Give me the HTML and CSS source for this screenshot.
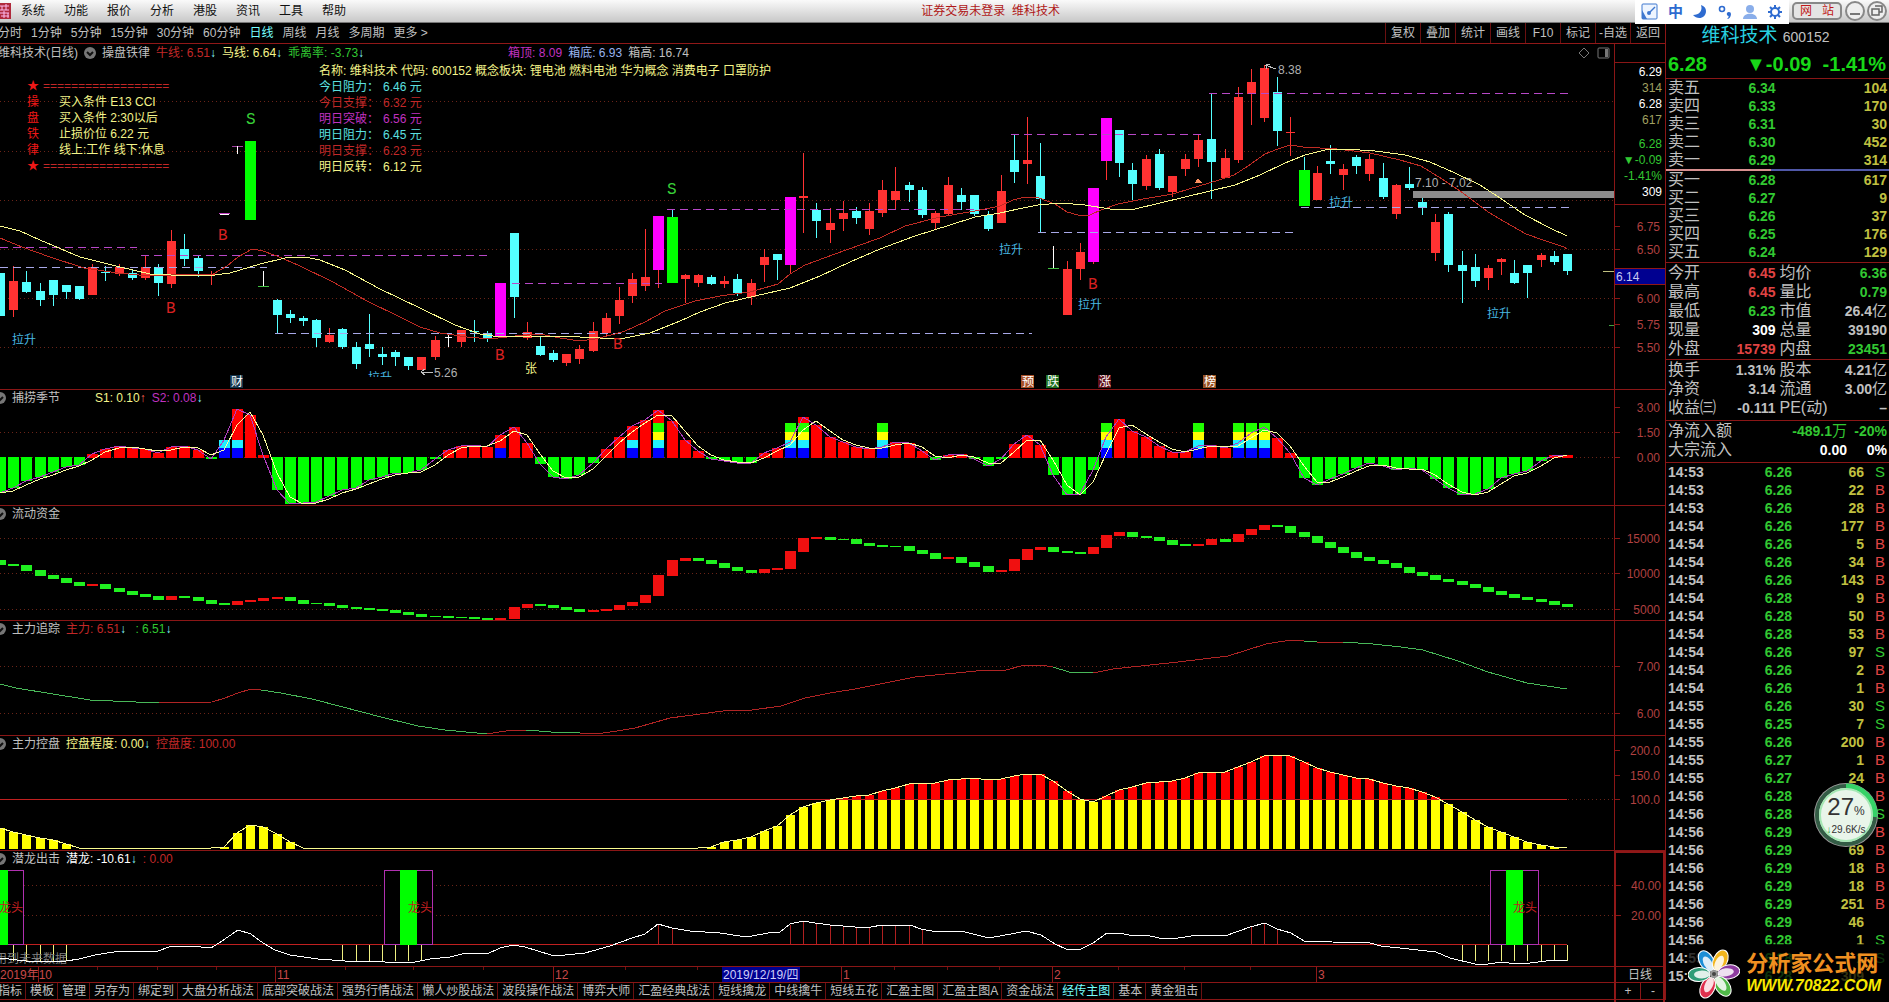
FILE: index.html
```html
<!DOCTYPE html>
<html lang="zh-CN">
<head>
    <meta charset="UTF-8">
    <meta name="viewport" content="width=device-width, initial-scale=1.0">
    <title>维科技术 600152</title>
    <link rel="stylesheet" href="styles.css">
</head>
<body>
    <header class="menubar">
        <span class="app-icon"><svg width="12" height="16" viewBox="0 0 12 16"><rect width="11" height="16" fill="#b02a3c"/><path d="M0 3h9M0 7h9M2 3v4M6 1v6M0 10h9M1 13h8M4 8v7M8 10v5" stroke="#fbe" stroke-width="1"/></svg></span>
        <nav class="menu">
            <button>系统</button>
            <button>功能</button>
            <button>报价</button>
            <button>分析</button>
            <button>港股</button>
            <button>资讯</button>
            <button>工具</button>
            <button>帮助</button>
        </nav>
        <div class="title">证券交易未登录&nbsp; 维科技术</div>
        <div class="ime">
            <svg width="18" height="18" viewBox="0 0 18 18"><rect x="1" y="1" width="15" height="15" rx="1" fill="#eef5ff" stroke="#3f78cf"/><path d="M1 7l5 9H1z" fill="#3f78cf"/><path d="M14 4L8 10" stroke="#3f78cf" stroke-width="1.5"/><circle cx="8" cy="10" r="2" fill="#3f78cf"/></svg>
            <b>中</b>
            <svg width="16" height="16" viewBox="0 0 16 16"><path d="M9 1c2 6-2 10-8 10 4 5 13 4 13-4 0-3-2-5-5-6z" fill="#2e6bd0"/></svg>
            <svg width="16" height="16" viewBox="0 0 16 16"><circle cx="5" cy="5" r="2.5" fill="none" stroke="#2e6bd0" stroke-width="1.6"/><path d="M12 8a2 2 0 0 1 2 2c0 3-2 5-4 5 1-1 2-2 1.5-3a2 2 0 0 1 .5-4z" fill="#2e6bd0"/></svg>
            <svg width="16" height="16" viewBox="0 0 16 16"><circle cx="8" cy="5" r="4" fill="#8aaeea"/><path d="M1 15c0-7 14-7 14 0z" fill="#8aaeea"/></svg>
            <svg width="16" height="16" viewBox="0 0 16 16"><circle cx="8" cy="8" r="4" fill="none" stroke="#2e6bd0" stroke-width="2"/><path d="M8 1v3M8 12v3M1 8h3M12 8h3M3 3l2 2M11 11l2 2M3 13l2-2M11 5l2-2" stroke="#2e6bd0" stroke-width="2"/></svg>
        </div>
        <button class="site">网&nbsp;&nbsp;&nbsp;站</button>
        <button class="win" aria-label="最小化"><svg width="20" height="20" viewBox="0 0 20 20"><circle cx="10" cy="10" r="9" fill="#eee" stroke="#888" stroke-width="2"/><path d="M5 13h10" stroke="#777" stroke-width="2"/></svg></button>
        <button class="win" aria-label="还原"><svg width="20" height="20" viewBox="0 0 20 20"><circle cx="10" cy="10" r="9" fill="#eee" stroke="#888" stroke-width="2"/><path d="M8 5h7v6h-3M5 8h7v6H5z" fill="none" stroke="#666" stroke-width="1.5"/></svg></button>
    </header>

    <div class="workspace">
        <main class="left">
            <div class="toolbar">
                <nav class="periods">
                    <button>分时</button>
                    <button>1分钟</button>
                    <button>5分钟</button>
                    <button>15分钟</button>
                    <button>30分钟</button>
                    <button>60分钟</button>
                    <button class="on">日线</button>
                    <button>周线</button>
                    <button>月线</button>
                    <button>多周期</button>
                    <button>更多 &gt;</button>
                </nav>
                <nav class="tools">
                    <button>复权</button>
                    <button>叠加</button>
                    <button>统计</button>
                    <button>画线</button>
                    <button>F10</button>
                    <button>标记</button>
                    <button>-自选</button>
                    <button>返回</button>
                </nav>
            </div>

            <section class="panel panel-main">
                <div class="plot">
                    <div class="head head-main">
                        <span>维科技术(日线)</span>
                        <svg class="fold" viewBox="0 0 12 12"><circle cx="6" cy="6" r="6" fill="#777"/><path d="M3 5l3 3 3-3" fill="none" stroke="#111" stroke-width="2"/></svg>
                        <span>操盘铁律</span>
                        <span class="red">牛线: 6.51<i>↓</i></span>
                        <span class="yellow">马线: 6.64<i>↓</i></span>
                        <span class="green">乖离率: -3.73<i>↓</i></span>
                        <span class="magenta box-info">箱顶: 8.09</span>
                        <span class="blue">箱底: 6.93</span>
                        <span>箱高: 16.74</span>
                        <svg class="corner" width="32" height="14" viewBox="0 0 32 14"><path d="M6 2l5 5-5 5-5-5z" fill="none" stroke="#777"/><rect x="20" y="2" width="11" height="10" rx="1" fill="none" stroke="#777"/><path d="M27 3v8h3V3z" fill="#777"/></svg>
                    </div>
                    <svg class="chart" id="kline"></svg>
                    <div class="rule-note">
                        <div class="rule-side">★<br>操<br>盘<br>铁<br>律<br>★</div>
                        <div class="rule-text">
                            <p class="rule-line">==================</p>
                            <p>买入条件 E13 CCI</p>
                            <p>买入条件 2:30以后</p>
                            <p>止损价位 6.22 元</p>
                            <p>线上:工作 线下:休息</p>
                            <p class="rule-line">==================</p>
                        </div>
                    </div>
                    <div class="levels">
                        <p class="yellow">名称: 维科技术 代码: 600152 概念板块: 锂电池 燃料电池 华为概念 消费电子 口罩防护</p>
                        <p class="cyan">今日阻力：<span>6.46 元</span></p>
                        <p class="red">今日支撑：<span>6.32 元</span></p>
                        <p class="magenta">明日突破：<span>6.56 元</span></p>
                        <p class="cyan">明日阻力：<span>6.45 元</span></p>
                        <p class="red">明日支撑：<span>6.23 元</span></p>
                        <p class="yellow">明日反转：<span>6.12 元</span></p>
                    </div>
                </div>
                <div class="axis">
                    <div class="mini">
                        <p class="white">6.29</p>
                        <p class="olive">314</p>
                        <p class="white">6.28</p>
                        <p class="olive">617</p>
                        <p class="green mini-gap">6.28</p>
                        <p class="green">▼-0.09</p>
                        <p class="green">-1.41%</p>
                        <p class="white">309</p>
                    </div>
                    <svg class="scale" id="kline-scale"></svg>
                </div>
            </section>

            <section class="panel panel-tall">
                <div class="plot">
                    <div class="head">
                        <svg class="fold" viewBox="0 0 12 12"><circle cx="6" cy="6" r="6" fill="#777"/><path d="M3 5l3 3 3-3" fill="none" stroke="#111" stroke-width="2"/></svg>
                        <span class="wide">捕捞季节</span>
                        <span class="yellow">S1: 0.10<i class="up">↑</i></span>
                        <span class="magenta">S2: 0.08<i>↓</i></span>
                    </div>
                    <svg class="chart" id="season"></svg>
                </div>
                <div class="axis"><svg class="scale" id="season-scale"></svg></div>
            </section>

            <section class="panel">
                <div class="plot">
                    <div class="head">
                        <svg class="fold" viewBox="0 0 12 12"><circle cx="6" cy="6" r="6" fill="#777"/><path d="M3 5l3 3 3-3" fill="none" stroke="#111" stroke-width="2"/></svg>
                        <span>流动资金</span>
                    </div>
                    <svg class="chart" id="flow"></svg>
                </div>
                <div class="axis"><svg class="scale" id="flow-scale"></svg></div>
            </section>

            <section class="panel">
                <div class="plot">
                    <div class="head">
                        <svg class="fold" viewBox="0 0 12 12"><circle cx="6" cy="6" r="6" fill="#777"/><path d="M3 5l3 3 3-3" fill="none" stroke="#111" stroke-width="2"/></svg>
                        <span>主力追踪</span>
                        <span class="red">主力: 6.51<i>↓</i></span>
                        <span class="green">&nbsp;: 6.51<i>↓</i></span>
                    </div>
                    <svg class="chart" id="track"></svg>
                </div>
                <div class="axis"><svg class="scale" id="track-scale"></svg></div>
            </section>

            <section class="panel">
                <div class="plot">
                    <div class="head">
                        <svg class="fold" viewBox="0 0 12 12"><circle cx="6" cy="6" r="6" fill="#777"/><path d="M3 5l3 3 3-3" fill="none" stroke="#111" stroke-width="2"/></svg>
                        <span>主力控盘</span>
                        <span class="yellow">控盘程度: 0.00<i>↓</i></span>
                        <span class="red">控盘度: 100.00</span>
                    </div>
                    <svg class="chart" id="control"></svg>
                </div>
                <div class="axis"><svg class="scale" id="control-scale"></svg></div>
            </section>

            <section class="panel panel-tall">
                <div class="plot">
                    <div class="head">
                        <svg class="fold" viewBox="0 0 12 12"><circle cx="6" cy="6" r="6" fill="#777"/><path d="M3 5l3 3 3-3" fill="none" stroke="#111" stroke-width="2"/></svg>
                        <span>潜龙出击</span>
                        <span class="white">潜龙: -10.61<i>↓</i></span>
                        <span class="red">: 0.00</span>
                    </div>
                    <svg class="chart" id="dragon"></svg>
                </div>
                <div class="axis axis-active"><svg class="scale" id="dragon-scale"></svg></div>
            </section>

            <div class="timeline">
                <svg id="dates"></svg>
                <div class="period-name">日线</div>
            </div>

            <div class="tabs">
                <nav>
                    <button>指标</button>
                    <button>模板</button>
                    <button>管理</button>
                    <button>另存为</button>
                    <button>绑定到</button>
                    <button>大盘分析战法</button>
                    <button>底部突破战法</button>
                    <button>强势行情战法</button>
                    <button>懒人炒股战法</button>
                    <button>波段操作战法</button>
                    <button>博弈大师</button>
                    <button>汇盈经典战法</button>
                    <button>短线擒龙</button>
                    <button>中线擒牛</button>
                    <button>短线五花</button>
                    <button>汇盈主图</button>
                    <button>汇盈主图A</button>
                    <button>资金战法</button>
                    <button class="on">经传主图</button>
                    <button>基本</button>
                    <button>黄金狙击</button>
                </nav>
                <div class="zoomers">
                    <button>+</button>
                    <button>-</button>
                </div>
            </div>
        </main>

        <aside class="quote">
            <h1>维科技术 <small>600152</small></h1>
            <div class="price">
                <span>6.28</span>
                <span class="change">▼-0.09</span>
                <span>-1.41%</span>
            </div>
            <table class="book">
                <tr><th>卖五</th><td>6.34</td><td>104</td></tr>
                <tr><th>卖四</th><td>6.33</td><td>170</td></tr>
                <tr><th>卖三</th><td>6.31</td><td>30</td></tr>
                <tr><th>卖二</th><td>6.30</td><td>452</td></tr>
                <tr><th>卖一</th><td>6.29</td><td>314</td></tr>
            </table>
            <div class="ratio"></div>
            <table class="book">
                <tr><th>买一</th><td>6.28</td><td>617</td></tr>
                <tr><th>买二</th><td>6.27</td><td>9</td></tr>
                <tr><th>买三</th><td>6.26</td><td>37</td></tr>
                <tr><th>买四</th><td>6.25</td><td>176</td></tr>
                <tr><th>买五</th><td>6.24</td><td>129</td></tr>
            </table>
            <table class="stats">
                <tr><th>今开</th><td class="up">6.45</td><th>均价</th><td class="down">6.36</td></tr>
                <tr><th>最高</th><td class="up">6.45</td><th>量比</th><td class="down">0.79</td></tr>
                <tr><th>最低</th><td class="down">6.23</td><th>市值</th><td>26.4<span>亿</span></td></tr>
                <tr><th>现量</th><td class="white">309</td><th>总量</th><td>39190</td></tr>
                <tr><th>外盘</th><td class="up">15739</td><th>内盘</th><td class="down">23451</td></tr>
            </table>
            <table class="stats stats-base">
                <tr><th>换手</th><td>1.31%</td><th>股本</th><td>4.21<span>亿</span></td></tr>
                <tr><th>净资</th><td>3.14</td><th>流通</th><td>3.00<span>亿</span></td></tr>
                <tr><th>收益㈢</th><td>-0.111</td><th>PE(动)</th><td class="dash">–</td></tr>
            </table>
            <table class="inflow">
                <tr class="down"><th>净流入额</th><td>-489.1<span>万</span></td><td>-20%</td></tr>
                <tr class="white"><th>大宗流入</th><td>0.00</td><td>0%</td></tr>
            </table>
            <table class="ticks"><tbody id="ticks"></tbody></table>

            <div class="speed">
                <svg width="66" height="66" viewBox="0 0 66 66"><circle cx="33" cy="33" r="32" fill="#9a9a9a"/><circle cx="33" cy="33" r="29" fill="#e9f5ea" stroke="#335c45" stroke-width="4"/><path d="M33 4a29 29 0 0 1 29 31" fill="none" stroke="#35d267" stroke-width="5"/><circle cx="33" cy="33" r="26" fill="none" stroke="#a5e8b4" stroke-width="2"/></svg>
                <div class="speed-text"><b>27<small>%</small></b><span><i>↓</i>29.6K/s</span></div>
            </div>
            <div class="brand">
                <svg width="52" height="52" viewBox="-26 -26 52 52">
                    <g stroke="#fff" stroke-width="1">
                        <ellipse cx="0" cy="-15" rx="7" ry="11" fill="#1c8fd6" transform="rotate(-30)"/>
                        <ellipse cx="0" cy="-15" rx="7" ry="11" fill="#f2b51c" transform="rotate(25)"/>
                        <ellipse cx="0" cy="-15" rx="7" ry="11" fill="#8e3ba0" transform="rotate(82)"/>
                        <ellipse cx="0" cy="-15" rx="7" ry="11" fill="#4fb848" transform="rotate(145)"/>
                        <ellipse cx="0" cy="-15" rx="7" ry="11" fill="#e0304e" transform="rotate(205)"/>
                        <ellipse cx="0" cy="-15" rx="7" ry="11" fill="#2f9c78" transform="rotate(268)"/>
                    </g>
                    <g fill="#fff" opacity=".85">
                        <ellipse cx="0" cy="-12" rx="4" ry="8" transform="rotate(-30)"/>
                        <ellipse cx="0" cy="-12" rx="4" ry="8" transform="rotate(25)"/>
                        <ellipse cx="0" cy="-12" rx="4" ry="8" transform="rotate(82)"/>
                        <ellipse cx="0" cy="-12" rx="4" ry="8" transform="rotate(145)"/>
                        <ellipse cx="0" cy="-12" rx="4" ry="8" transform="rotate(205)"/>
                        <ellipse cx="0" cy="-12" rx="4" ry="8" transform="rotate(268)"/>
                    </g>
                    <circle r="4" fill="#999"/><circle r="2" fill="#444"/>
                </svg>
                <div>
                    <strong>分析家公式网</strong>
                    <a href="#">WWW.70822.COM</a>
                </div>
            </div>
        </aside>
    </div>

    <script src="script.js"></script>
</body>
</html>
```
FILE: styles.css
```css
* {
    box-sizing: border-box;
}
body {
    margin: 0;
    min-height: 100vh;
    background-color: #000;
    color: #c0c0c0;
    font-family: "Liberation Sans", "Noto Sans CJK SC", sans-serif;
    font-size: 12px;
    line-height: 16px;
    overflow-x: hidden;
}
button {
    border: none;
    background: none;
    padding: 0;
    color: inherit;
    font: inherit;
    white-space: nowrap;
    cursor: pointer;
}
p {
    margin: 0;
}
svg {
    display: block;
}
i {
    font-style: normal;
    font-weight: bold;
    color: #8ff;
}
i.up {
    color: #f65;
}

.red { color: #c22828; }
.green { color: #32c832; }
.yellow { color: #f4f48a; }
.cyan { color: #5ce0e0; }
.magenta { color: #c032c0; }
.blue { color: #98b4f0; }
.white { color: #fff; }
.olive { color: #a0a060; }

/* メニューバー */
.menubar {
    display: flex;
    align-items: center;
    height: 23px;
    background: linear-gradient(#fafafa, #c8c8c8);
    border-bottom: 1px solid #777;
    color: #111;
}
.app-icon {
    width: 21px;
}
.menu {
    display: flex;
    gap: 19px;
}
.title {
    margin-left: auto;
    color: #b01818;
}
.ime {
    display: flex;
    align-items: center;
    justify-content: space-between;
    align-self: flex-start;
    width: 154px;
    height: 24px;
    margin-left: auto;
    padding: 0 6px;
    background-color: #fff;
    color: #2e6bd0;
    font-size: 15px;
    z-index: 1;
}
.site {
    width: 50px;
    height: 18px;
    margin: 0 3px;
    border: 2px solid #888;
    border-radius: 5px;
    background-color: #e4e4e4;
    color: #c01818;
    line-height: 12px;
}
.win {
    width: 22px;
}

.workspace {
    display: flex;
}
.left {
    flex: 1;
    min-width: 0;
}

/* ツールバー */
.toolbar {
    display: flex;
    justify-content: space-between;
    height: 21px;
    border-bottom: 1px solid #901818;
}
.periods {
    display: flex;
    gap: 9px;
    margin-left: -2px;
}
.tools {
    display: flex;
}
.tools button {
    width: 35px;
    border-left: 1px solid #6a1010;
}
.on {
    color: #7ff;
}

/* チャート */
.panel {
    display: grid;
    grid-template-columns: 1fr 51px;
    height: 115px;
    border-bottom: 1px solid #8a1616;
}
.panel-tall {
    height: 116px;
}
.panel-main {
    height: 346px;
}
.plot {
    position: relative;
    display: flex;
    flex-direction: column;
    min-width: 0;
    overflow: hidden;
}
.head {
    display: flex;
    align-items: center;
    gap: 6px;
    height: 16px;
    margin-left: -6px;
    white-space: nowrap;
}
.head-main {
    height: 18px;
    margin-left: -2px;
}
.head .wide {
    width: 77px;
}
.box-info {
    margin-left: 138px;
}
.corner {
    margin-left: auto;
    margin-right: 4px;
}
.fold {
    flex: none;
    width: 12px;
    height: 12px;
}
.chart {
    flex: 1;
    width: 100%;
    min-height: 0;
    overflow: visible;
}
svg text {
    font-size: 12px;
    fill: currentColor;
}
svg .signal {
    font-family: "Liberation Mono", monospace;
    font-size: 16px;
}
.axis {
    display: flex;
    flex-direction: column;
    border-left: 1px solid #8a1616;
    color: #b04040;
}
.axis-active {
    border: 2px solid #901818;
}
.scale {
    flex: 1;
    width: 100%;
    min-height: 0;
    overflow: visible;
}
.mini {
    height: 143px;
    margin-top: 18px;
    padding: 1px 3px 0 0;
    border-top: 1px solid #8a1616;
    border-bottom: 1px solid #8a1616;
    text-align: right;
    line-height: 16px;
}
.mini-gap {
    margin-top: 8px;
}
.rule-note {
    position: absolute;
    top: 34px;
    left: 27px;
    display: flex;
    color: #f01818;
}
.rule-text {
    color: #f4f48a;
}
.rule-text p {
    margin-left: 20px;
}
.rule-text .rule-line {
    margin-left: 4px;
    color: #c22828;
}
.levels {
    position: absolute;
    top: 19px;
    left: 319px;
    white-space: nowrap;
}
.levels span {
    margin-left: 4px;
}
.timeline {
    display: grid;
    grid-template-columns: 1fr 51px;
    height: 16px;
    border-bottom: 1px solid #8a1616;
    color: #c04040;
}
#dates {
    width: 100%;
    height: 16px;
}
.period-name {
    border-left: 1px solid #8a1616;
    color: #c0c0c0;
    text-align: center;
}
.tabs {
    display: flex;
    justify-content: space-between;
    height: 17px;
    border-bottom: 1px solid #8a1616;
}
.tabs nav {
    display: flex;
    margin-left: -6px;
}
.tabs nav button {
    padding: 0 3px 0 4px;
    border-right: 1px solid #6a1010;
}
.zoomers {
    display: flex;
}
.zoomers button {
    width: 25px;
    border-left: 1px solid #8a1616;
}

/* 気配・歩み値 */
.quote {
    position: relative;
    width: 224px;
    border-left: 1px solid #8a1616;
    font-size: 14px;
}
.quote h1 {
    height: 28px;
    margin: 0;
    padding-right: 24px;
    color: #28d0e0;
    font-size: 19px;
    font-weight: normal;
    line-height: 26px;
    text-align: center;
}
.quote h1 small {
    color: #c0c0c0;
    font-size: 14px;
}
.price {
    display: flex;
    justify-content: space-between;
    height: 28px;
    padding: 0 3px 0 2px;
    border-bottom: 1px solid #8a1616;
    color: #18d818;
    font-size: 20px;
    font-weight: bold;
    line-height: 27px;
}
.change {
    margin-left: 28px;
}
.quote table {
    width: 100%;
    border-collapse: separate;
    border-spacing: 0;
    table-layout: fixed;
    line-height: 18px;
}
.quote th {
    padding: 0 0 0 2px;
    font-size: 16px;
    font-weight: normal;
    text-align: left;
    white-space: nowrap;
}
.quote td {
    padding: 0;
    font-weight: bold;
    text-align: right;
    white-space: nowrap;
}
.quote td:last-child {
    padding-right: 2px;
}
.quote td span {
    font-size: 15px;
    font-weight: normal;
}
.book tr,
.ticks tr {
    height: 18px;
}
.book td {
    color: #c0c040;
}
.book td:nth-child(2) {
    padding-right: 39px;
    color: #32c832;
}
.ratio {
    height: 2px;
    background: linear-gradient(90deg, #d89090 47%, #5058a8 47%);
}
.stats {
    margin-top: 1px;
    border-top: 1px solid #8a1616;
}
.stats tr,
.inflow tr {
    height: 19px;
}
.stats th {
    width: 50px;
}
.stats td:nth-child(2) {
    padding-right: 2px;
}
.quote .up {
    color: #e04444;
}
.quote .down,
.quote .down td {
    color: #32c832;
}
.quote .down th,
.quote .white th {
    color: #c0c0c0;
}
.quote .dash {
    padding-right: 14px;
}
.inflow {
    margin-top: 3px;
    padding-bottom: 3px;
    border-top: 1px solid #8a1616;
    border-bottom: 1px solid #8a1616;
}
.inflow th {
    width: 80px;
}
.inflow td:last-child {
    width: 42px;
}
.ticks td:nth-child(1) {
    width: 40px;
    padding-left: 2px;
    text-align: left;
}
.ticks td:nth-child(2) {
    width: 86px;
    color: #32c832;
}
.ticks td:nth-child(3) {
    width: 72px;
    color: #c0c040;
}
.ticks .sell {
    color: #32c832;
}
.ticks .buy {
    color: #e04444;
}
.quote .ticks td:last-child {
    padding-right: 4px;
    font-weight: normal;
    font-size: 15px;
}
.speed {
    position: absolute;
    top: 759px;
    right: 10px;
}
.speed-text {
    position: absolute;
    inset: 14px 0 0;
    color: #333;
    font-size: 10px;
    text-align: center;
}
.speed-text b {
    display: block;
    font-size: 24px;
    font-weight: normal;
    line-height: 22px;
}
.speed-text small {
    font-size: 12px;
}
.speed-text i {
    color: #1a9a40;
}
.brand {
    position: absolute;
    right: 0;
    bottom: 0;
    display: flex;
    align-items: center;
    gap: 6px;
    padding: 4px 8px 0 0;
    background-color: rgba(0, 0, 0, 0.75);
}
.brand strong {
    display: block;
    color: #f09020;
    font-size: 22px;
    line-height: 24px;
}
.brand a {
    display: block;
    color: #f8e800;
    font-size: 16px;
    font-style: italic;
    font-weight: bold;
    line-height: 20px;
    text-decoration: none;
}
```
FILE: script.js
```js
const NS = 'http://www.w3.org/2000/svg';
const BASE_WIDTH = 1614;
const BASE_STEP = 13.168;

const RED = '#ff3232';
const CYAN = '#54ffff';
const GREEN = '#00ff00';

// 種別, 実体上, 実体下, 高値, 安値
const candles = [
    ['c', 273, 316, 273, 316], ['r', 281, 310, 266, 317], ['c', 282, 292, 271, 293], ['c', 291, 300, 283, 306],
    ['c', 280, 295, 280, 306], ['c', 285, 292, 285, 299], ['c', 286, 299, 286, 300], ['r', 267, 295, 264, 295],
    ['c', 272, 273, 266, 281], ['r', 267, 274, 264, 276], ['c', 273, 278, 270, 280], ['r', 267, 278, 256, 280],
    ['c', 267, 283, 264, 296], ['r', 241, 284, 230, 288], ['c', 249, 259, 234, 266], ['c', 258, 271, 256, 277],
    ['r', 274, 275, 271, 285], ['p', 213, 214, 213, 214], ['t', 146, 147, 146, 154], ['G', 141, 220, 141, 220],
    ['u', 286, 287, 271, 286], ['c', 300, 315, 299, 333], ['c', 314, 318, 310, 323], ['c', 318, 321, 316, 326],
    ['c', 320, 338, 319, 347], ['r', 335, 342, 328, 343], ['c', 329, 347, 328, 349], ['c', 347, 364, 342, 369],
    ['c', 344, 349, 314, 357], ['c', 354, 357, 347, 365], ['c', 352, 357, 350, 366], ['c', 357, 366, 357, 370],
    ['r', 357, 370, 357, 370], ['r', 340, 357, 336, 360], ['w', 337, 338, 335, 347], ['r', 330, 342, 330, 347],
    ['c', 331, 332, 320, 342], ['c', 333, 338, 331, 342], ['M', 283, 337, 283, 337], ['c', 233, 297, 233, 318],
    ['r', 332, 338, 322, 340], ['c', 346, 355, 336, 356], ['c', 353, 360, 350, 362], ['r', 354, 363, 354, 366],
    ['r', 349, 359, 345, 364], ['r', 331, 351, 322, 352], ['r', 318, 333, 313, 337], ['r', 300, 316, 287, 324],
    ['r', 279, 296, 273, 303], ['r', 277, 286, 229, 291], ['M', 216, 270, 216, 288], ['G', 217, 283, 210, 283],
    ['r', 275, 279, 274, 303], ['r', 275, 283, 274, 287], ['c', 277, 284, 275, 285], ['r', 281, 284, 276, 288],
    ['c', 279, 293, 274, 296], ['r', 283, 297, 279, 305], ['r', 257, 265, 249, 282], ['c', 254, 260, 254, 280],
    ['M', 197, 265, 197, 273], ['r', 196, 198, 153, 233], ['c', 210, 221, 203, 238], ['r', 223, 230, 208, 243],
    ['r', 213, 219, 201, 231], ['c', 211, 218, 207, 224], ['r', 211, 229, 203, 235], ['r', 190, 213, 180, 217],
    ['r', 191, 200, 167, 210], ['c', 185, 190, 182, 202], ['c', 190, 215, 187, 218], ['r', 213, 223, 211, 229],
    ['r', 185, 214, 177, 216], ['c', 195, 202, 188, 210], ['c', 195, 214, 195, 216], ['c', 215, 229, 211, 231],
    ['r', 191, 223, 175, 223], ['c', 160, 172, 135, 183], ['r', 160, 164, 117, 184], ['c', 176, 199, 143, 232],
    ['u', 268, 269, 246, 268], ['r', 269, 315, 261, 315], ['r', 252, 269, 243, 280], ['M', 188, 262, 188, 264],
    ['M', 118, 161, 118, 180], ['c', 130, 163, 130, 177], ['c', 170, 184, 163, 200], ['r', 159, 186, 155, 190],
    ['c', 154, 188, 149, 190], ['r', 176, 192, 176, 197], ['r', 159, 169, 154, 176], ['r', 140, 159, 134, 167],
    ['c', 139, 162, 94, 199], ['r', 158, 178, 149, 178], ['r', 97, 160, 87, 163], ['r', 82, 94, 69, 125],
    ['r', 68, 118, 65, 122], ['c', 92, 131, 77, 146], ['r', 132, 133, 117, 156], ['G', 170, 206, 157, 206],
    ['r', 173, 200, 166, 200], ['c', 161, 164, 145, 174], ['r', 169, 175, 164, 190], ['c', 157, 166, 155, 174],
    ['r', 159, 174, 154, 181], ['c', 178, 197, 163, 199], ['r', 185, 214, 184, 219], ['c', 184, 188, 167, 190],
    ['c', 202, 208, 198, 215], ['r', 222, 253, 214, 261], ['c', 214, 265, 212, 272], ['c', 265, 271, 251, 303],
    ['c', 267, 281, 254, 287], ['r', 268, 278, 265, 290], ['r', 259, 262, 258, 275], ['c', 273, 283, 260, 284],
    ['c', 265, 273, 265, 298], ['r', 255, 260, 253, 267], ['c', 256, 262, 251, 265], ['c', 254, 271, 254, 275]
];

const maRed = '0,238 22,247 50,257 84,268 118,273 150,276 171,275 213,274 227,266 238,257 252,249 263,251 277,256 300,266 333,282 367,301 400,317 420,327 440,333 467,337 490,339 515,336 540,334 560,338 580,341 595,339 615,334 625,331 645,322 665,311 695,301 720,296 750,292 778,284 790,274 805,265 835,254 860,245 880,238 905,226 940,217 975,211 1000,206 1013,200 1025,197 1039,198 1055,204 1067,212 1078,215 1090,215 1101,210 1118,204 1143,199 1173,194 1189,189 1219,180 1234,175 1248,166 1265,154 1278,149 1290,145 1303,147 1337,149 1370,153 1400,160 1421,166 1442,179 1463,193 1488,212 1505,222 1526,234 1543,240 1564,247 1567,249';
const maYellow = '0,226 20,231 40,240 80,257 120,267 150,274 171,275 215,275 230,273 260,264 285,258 305,257 320,260 345,270 380,289 420,308 455,325 480,334 500,337 530,336 580,337 600,338 620,339 650,333 680,321 700,312 725,303 755,296 790,288 820,276 850,262 880,249 915,236 950,225 975,217 1000,213 1018,209 1038,205 1060,203 1085,205 1110,209 1135,209 1160,203 1185,197 1210,191 1235,185 1260,175 1285,163 1305,155 1325,150 1345,149 1375,151 1405,155 1430,162 1455,173 1480,185 1500,198 1525,215 1550,228 1567,236';

const season = [
    493, 488, 481, 477, 472, 467, 465, 454, 449, 446, 448, 449, 453, 447, 446, 450, 459, 440, 409, 415,
    455, 490, 504, 503, 502, 496, 490, 488, 480, 477, 473, 473, 470, 459, 450, 446, 445, 447, 435, 427,
    443, 464, 477, 479, 475, 463, 449, 437, 426, 420, 410, 421, 440, 451, 459, 461, 463, 463, 453, 448,
    442, 417, 425, 437, 442, 447, 449, 447, 442, 443, 451, 460, 455, 454, 459, 466, 459, 444, 435, 445,
    475, 495, 494, 470, 437, 419, 431, 437, 446, 452, 452, 446, 445, 448, 443, 433, 427, 438, 453, 478,
    485, 479, 474, 468, 463, 466, 470, 468, 470, 479, 488, 495, 494, 489, 478, 474, 471, 461, 455, 455
];
// 積み上げ表示の段数
const stacks = { 17: 2, 18: 2, 38: 1, 48: 2, 50: 4, 60: 4, 61: 4, 67: 4, 84: 4, 91: 4, 94: 4, 95: 4, 96: 4 };

const flow = [
    184, 185, 190, 195, 198, 202, 205, 204, 208, 211, 214, 216, 219, 216, 217, 220, 223, 224, 221, 220,
    218, 217, 220, 223, 223, 225, 227, 228, 229, 230, 232, 234, 236, 236, 237, 237, 238, 239, 238, 227,
    224, 225, 227, 229, 231, 230, 229, 225, 222, 215, 195, 180, 178, 180, 183, 187, 190, 192, 189, 188,
    171, 158, 157, 159, 159, 163, 165, 166, 166, 170, 173, 178, 177, 182, 186, 191, 190, 179, 169, 167,
    171, 172, 173, 167, 155, 152, 156, 157, 160, 164, 165, 164, 159, 161, 154, 149, 145, 146, 152, 156,
    162, 167, 172, 177, 180, 183, 187, 192, 195, 199, 201, 204, 207, 211, 214, 217, 219, 221, 224, 226
];

const track = [
    ['g', '0,684 16,688 90,700 159,703'],
    ['r', '159,703 212,702 225,698 238,693 251,689 261,690'],
    ['g', '261,690 281,693 312,699 339,706 381,717 418,726 445,730 466,732 487,734'],
    ['r', '487,734 512,730 526,730'],
    ['g', '526,730 551,732 580,733'],
    ['r', '580,733 596,734 617,731 635,728 670,718 723,711 752,710 781,706 805,698 830,693 855,689 915,677 976,671 1006,670 1025,665 1041,665 1053,667'],
    ['g', '1053,667 1069,672 1093,673'],
    ['r', '1093,673 1113,669 1178,662 1228,656 1266,644 1291,640 1304,641'],
    ['g', '1304,641 1317,642'],
    ['r', '1317,642 1343,642'],
    ['g', '1343,642 1373,644 1401,647 1423,650 1458,661 1488,672 1527,683 1567,689']
];

const control = [
    828, 832, 835, 838, 840, 844, 848, 848, 848, 848, 848, 848, 848, 848, 848, 848, 848, 847, 833, 825,
    827, 834, 842, 848, 848, 848, 848, 848, 848, 848, 848, 848, 848, 848, 848, 848, 848, 848, 848, 848,
    848, 848, 848, 848, 848, 848, 848, 848, 848, 848, 848, 848, 848, 848, 847, 842, 840, 837, 831, 826,
    815, 807, 803, 800, 798, 796, 795, 791, 788, 784, 783, 783, 780, 779, 778, 780, 779, 776, 774, 774,
    781, 791, 799, 802, 796, 790, 787, 783, 782, 781, 778, 773, 772, 772, 767, 762, 756, 755, 756, 762,
    768, 772, 775, 778, 779, 783, 786, 788, 792, 797, 804, 812, 820, 827, 832, 837, 842, 845, 847, 848
];

const dragon = '0,958 26,961 66,961 79,959 95,955 120,951 150,951 158,951 172,946 190,946 211,948 222,941 238,930 251,934 263,943 275,950 290,955 318,959 345,961 357,962 370,961 385,962 415,962 430,959 450,957 462,954 475,953 487,954 500,948 513,945 525,947 551,955 565,955 585,953 610,946 632,938 645,934 658,924 672,928 690,931 720,933 740,936 752,936 768,933 780,932 790,924 803,921 815,923 830,925 855,927 871,927 882,925 910,925 921,929 937,932 948,931 965,932 989,938 1011,934 1026,931 1041,935 1055,944 1066,949 1079,950 1093,943 1107,933 1118,933 1135,936 1146,935 1159,938 1178,938 1198,935 1225,936 1250,927 1265,923 1277,929 1291,933 1304,941 1332,942 1370,943 1381,946 1409,949 1436,952 1450,958 1475,964 1488,964 1502,962 1516,964 1530,963 1554,960 1567,960';

let ratio = 1;

function px(x) {
    return Math.round(x * ratio);
}

function barX(i) {
    return px(i * BASE_STEP);
}

function add(parent, name, attrs, text) {
    const el = document.createElementNS(NS, name);
    for (const key in attrs) el.setAttribute(key, attrs[key]);
    if (text !== undefined) el.textContent = text;
    parent.appendChild(el);
    return el;
}

// 各チャートは画面のY座標で描くので、開始位置だけずらす
function layer(id, top) {
    const svg = document.getElementById(id);
    svg.innerHTML = '';
    return add(svg, 'g', { transform: `translate(0,${-top})`, 'shape-rendering': 'crispEdges' });
}

function rect(g, x, y, w, h, fill) {
    add(g, 'rect', { x: x, y: y, width: w, height: Math.max(1, h), fill: fill });
}

function line(g, x1, y1, x2, y2, stroke, dash) {
    const el = add(g, 'line', { x1: x1, y1: y1 + 0.5, x2: x2, y2: y2 + 0.5, stroke: stroke });
    if (dash) el.setAttribute('stroke-dasharray', dash);
}

function vline(g, x, y1, y2, stroke) {
    rect(g, x, y1, 1, y2 - y1, stroke);
}

function poly(g, points, stroke) {
    const scaled = points.split(' ').map(p => {
        const [x, y] = p.split(',');
        return `${px(x)},${y}`;
    }).join(' ');
    add(g, 'polyline', { points: scaled, fill: 'none', stroke: stroke });
}

function label(g, x, y, text, color, cls) {
    add(g, 'text', { x: x, y: y, style: `fill:${color}`, class: cls || '' }, text);
}

function grid(g, ys) {
    ys.forEach(y => line(g, 0, y, px(BASE_WIDTH), y, '#6a2418', '1 3'));
}

function scale(id, top, labels) {
    const g = layer(id, top);
    labels.forEach(([y, text]) => {
        rect(g, 0, y, 5, 1, '#8a1616');
        add(g, 'text', { x: 45, y: y + 5, 'text-anchor': 'end' }, text);
    });
    return g;
}

function drawKline() {
    const g = layer('kline', 62);
    grid(g, [101, 151, 200, 249, 298, 347]);

    candles.forEach(([type, top, bottom, high, low], i) => {
        const x = barX(i);
        const h = bottom - top;
        if (type === 'c' || type === 'r') {
            const color = type === 'c' ? CYAN : RED;
            vline(g, x, high, low, color);
            rect(g, x - 4, top, 9, h, color);
        } else if (type === 'G' || type === 'M') {
            vline(g, x, high, low, type === 'G' ? CYAN : RED);
            rect(g, x - 5, top, 11, h, type === 'G' ? GREEN : '#ff00ff');
        } else if (type === 'p') {
            rect(g, x - 5, top, 11, 1, '#c040c0');
            rect(g, x - 4, top + 1, 9, 1, '#fff');
        } else {
            const w = type === 'w' ? 7 : 11;
            rect(g, x - (w - 1) / 2, top, w, 1, type === 'u' ? '#40c040' : type === 't' ? '#a040a0' : '#fff');
            vline(g, x, high, low, '#fff');
        }
    });

    const purple = [[0, 137, 247], [141, 492, 255], [512, 662, 283], [667, 993, 209], [1011, 1202, 134], [1209, 1572, 93]];
    const pale = [[0, 267, 267], [275, 1032, 333], [1038, 1296, 232], [1301, 1572, 207]];
    purple.forEach(([a, b, y]) => line(g, px(a), y, px(b), y, '#b848c8', '8 5'));
    pale.forEach(([a, b, y]) => line(g, px(a), y, px(b), y, '#a8a8e8', '8 5'));

    rect(g, px(1413), 191, px(1614) - px(1413), 7, '#8c8c8c');
    poly(g, maRed, '#c02c24');
    poly(g, maYellow, '#f8f88c');

    label(g, px(1415), 187, '7.10 - 7.02', '#b0b0b0');
    label(g, px(1278), 74, '8.38', '#b0b0b0');
    label(g, px(434), 377, '5.26', '#b0b0b0');
    add(g, 'path', { d: `M${px(1276)} 69l-11-4m1 4v-5h4`, fill: 'none', stroke: '#c0c0c0' });
    add(g, 'path', { d: `M${px(433)} 372h-12m4-3l-4 3 4 3`, fill: 'none', stroke: '#c0c0c0' });
    add(g, 'path', { d: `M${px(1198)} 178l4 5h-7z`, fill: '#ff9060' });

    [[246, 124], [667, 194]].forEach(([x, y]) => label(g, px(x), y, 'S', '#38d038', 'signal'));
    [[218, 240], [166, 313], [495, 360], [613, 349], [1088, 289]].forEach(([x, y]) => label(g, px(x), y, 'B', '#d82020', 'signal'));
    [[12, 344], [999, 254], [1329, 207], [1078, 309], [1487, 318], [368, 382]].forEach(([x, y]) => label(g, px(x), y, '拉升', '#48b8e0'));
    rect(g, px(366), 377, 28, 10, '#000');
    label(g, px(525), 373, '张', '#f4f48a');

    [[231, '财', '#14344c'], [1022, '预', '#a85028'], [1047, '跌', '#207020'], [1099, '涨', '#601018'], [1204, '榜', '#985020']].forEach(([x, text, bg]) => {
        rect(g, px(x) - 1, 375, 13, 13, bg);
        label(g, px(x), 386, text, '#fff');
    });
    rect(g, px(1603), 271, 11, 1, '#c0c080');
    rect(g, px(1609), 325, 5, 1, '#40a040');

    const s = scale('kline-scale', 205, [[226, '6.75'], [249, '6.50'], [298, '6.00'], [324, '5.75'], [347, '5.50']]);
    rect(s, 0, 268, 50, 17, '#901818');
    rect(s, 0, 269, 50, 15, '#000090');
    label(s, 1, 281, '6.14', '#c8c8f0');
}

function drawSeason() {
    const g = layer('season', 406);
    grid(g, [432, 457]);
    const colors = ['#0000ff', '#20f0ff', '#ffff00', '#20ff00'];
    season.forEach((y, i) => {
        const x = barX(i) - 5;
        if (stacks[i] !== 4 || y < 423) {
            if (y > 457) rect(g, x, 457, 11, y - 457, GREEN);
            else rect(g, x, y, 11, 458 - y, '#ff0000');
        }
        for (let n = 0; n < (stacks[i] || 0); n++) {
            rect(g, x, [448, 440, 432, 423][n], 11, n === 0 ? 10 : n === 3 ? 9 : 8, colors[n]);
        }
    });
    // 2本平均
    const slow = season.map((v, i) => Math.round((v + season[Math.max(0, i - 1)]) / 2));
    poly(g, season.map((v, i) => `${i * BASE_STEP},${v}`).join(' '), '#b040c0');
    poly(g, slow.map((v, i) => `${i * BASE_STEP},${v}`).join(' '), '#fcfca0');
    scale('season-scale', 390, [[407, '3.00'], [432, '1.50'], [457, '0.00']]);
}

function drawFlow() {
    const g = layer('flow', 142);
    grid(g, [158, 193, 229]);
    let prev = 180;
    flow.forEach((v, i) => {
        rect(g, barX(i) - 5, Math.min(prev, v), 11, Math.abs(v - prev) + 1, v >= prev ? '#20f020' : '#f01010');
        prev = v;
    });
    scale('flow-scale', 126, [[158, '15000'], [193, '10000'], [229, '5000']]);
}

function drawTrack() {
    const g = layer('track', 637);
    grid(g, [666, 713]);
    track.forEach(([c, points]) => poly(g, points, c === 'g' ? '#48b858' : '#b02424'));
    scale('track-scale', 621, [[666, '7.00'], [713, '6.00']]);
}

function drawControl() {
    const g = layer('control', 752);
    grid(g, [799]);
    line(g, 0, 799, px(1567), 799, '#c02020');
    control.forEach((y, i) => {
        if (y >= 848) return;
        const x = barX(i) - 4;
        if (y < 799) rect(g, x, y, 9, 799 - y, '#ff0000');
        rect(g, x, Math.max(y, 800), 9, 849 - Math.max(y, 800), '#ffff00');
    });
    poly(g, control.map((v, i) => `${i * BASE_STEP},${v}`).join(' '), '#fcfc90');
    scale('control-scale', 736, [[750, '200.0'], [775, '150.0'], [799, '100.0']]);
}

function drawDragon() {
    const g = layer('dragon', 867);
    grid(g, [885, 915]);
    line(g, 0, 944, px(1567), 944, '#c02020');
    [[-8, 23], [384, 432], [1490, 1538]].forEach(([a, b]) => {
        add(g, 'rect', { x: px(a) + 0.5, y: 870.5, width: px(b) - px(a), height: 74, fill: '#000', stroke: '#b030b0' });
    });
    [[-8, 8], [400, 417], [1506, 1523]].forEach(([a, b]) => rect(g, px(a), 870, px(b) - px(a), 75, GREEN));
    [-1, 408, 1513].forEach(x => label(g, px(x), 912, '龙头', '#c82020'));

    const sticks = [1, 2, 3, 4, 5, 26, 27, 28, 29, 30, 31, 32, 111, 112, 113, 114, 115, 116, 117, 118, 119];
    sticks.forEach(i => vline(g, barX(i), 945, 961, '#f0f080'));
    [[50, 925], [51, 928], [60, 925], [61, 922], [62, 923], [63, 925], [64, 927], [65, 927], [66, 927], [67, 925],
        [68, 925], [69, 925], [70, 929], [95, 927], [96, 923], [97, 929]].forEach(([i, y]) => vline(g, barX(i), y, 944, '#b02020'));
    label(g, px(-5), 963, '用到未来数据', '#808080');
    poly(g, dragon, '#fff');
    scale('dragon-scale', 853, [[885, '40.00'], [915, '20.00']]);
}

function drawDates() {
    const g = layer('dates', 0);
    [[275, '11'], [553, '12'], [841, '1'], [1052, '2'], [1316, '3']].forEach(([x, text]) => {
        vline(g, px(x), 0, 16, '#901818');
        label(g, px(x) + 2, 12, text, '#c84848');
    });
    vline(g, px(38), 0, 16, '#901818');
    [97, 157, 216, 345, 413, 483, 625, 697, 894, 947, 999, 1118, 1184, 1250].forEach(x => vline(g, px(x), 0, 3, '#701010'));
    label(g, 0, 12, '2019年10', '#c84848');
    rect(g, px(722), 0, 78, 15, '#000090');
    label(g, px(723), 12, '2019/12/19/四', '#d0d0f8');
}

const ticks = [
    ['14:53', '6.26', 66, 'S'], ['14:53', '6.26', 22, 'B'], ['14:53', '6.26', 28, 'B'], ['14:54', '6.26', 177, 'B'],
    ['14:54', '6.26', 5, 'B'], ['14:54', '6.26', 34, 'B'], ['14:54', '6.26', 143, 'B'], ['14:54', '6.28', 9, 'B'],
    ['14:54', '6.28', 50, 'B'], ['14:54', '6.28', 53, 'B'], ['14:54', '6.26', 97, 'S'], ['14:54', '6.26', 2, 'B'],
    ['14:54', '6.26', 1, 'B'], ['14:55', '6.26', 30, 'S'], ['14:55', '6.25', 7, 'S'], ['14:55', '6.26', 200, 'B'],
    ['14:55', '6.27', 1, 'B'], ['14:55', '6.27', 24, 'B'], ['14:56', '6.28', 55, 'B'], ['14:56', '6.28', 10, 'S'],
    ['14:56', '6.29', 5, 'B'], ['14:56', '6.29', 69, 'B'], ['14:56', '6.29', 18, 'B'], ['14:56', '6.29', 18, 'B'],
    ['14:56', '6.29', 251, 'B'], ['14:56', '6.29', 46, ''], ['14:56', '6.28', 1, 'S'], ['14:59', '6.28', 1, 'S'],
    ['15:00', '6.28', 309, '']
];

function fillTicks() {
    document.getElementById('ticks').innerHTML = ticks.map(([time, price, vol, side]) =>
        `<tr><td>${time}</td><td>${price}</td><td>${vol}</td><td class="${side === 'S' ? 'sell' : 'buy'}">${side}</td></tr>`
    ).join('');
}

function drawAll() {
    ratio = document.getElementById('kline').clientWidth / BASE_WIDTH;
    drawKline();
    drawSeason();
    drawFlow();
    drawTrack();
    drawControl();
    drawDragon();
    drawDates();
}

fillTicks();
drawAll();
window.addEventListener('resize', drawAll);
```
